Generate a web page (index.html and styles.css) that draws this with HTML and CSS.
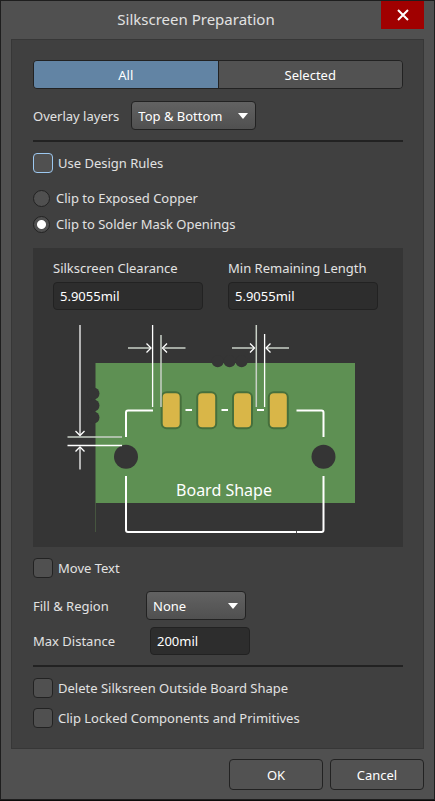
FILE: index.html
```
<!DOCTYPE html>
<html lang="en">

<head>
  <meta charset="UTF-8">
  <meta name="viewport" content="width=device-width, initial-scale=1">
  <title>Silkscreen Preparation</title>
  <link rel="stylesheet" href="styles.css">
</head>

<body>
  <form class="dialog">
    <header class="title-bar">
      <h1 class="title">Silkscreen Preparation</h1>
      <button type="button" class="close" aria-label="Close">
        <svg width="12" height="12" viewBox="0 0 12 12">
          <path d="M1 1l10 10M11 1L1 11" stroke="#fff" stroke-width="2" />
        </svg>
      </button>
    </header>

    <main class="panel">
      <div class="tabs">
        <button type="button" class="tab active">All</button>
        <button type="button" class="tab">Selected</button>
      </div>

      <div class="overlay">
        <label for="layers">Overlay layers</label>
        <select class="select layers" id="layers">
          <option>Top &amp; Bottom</option>
          <option>Top</option>
          <option>Bottom</option>
        </select>
      </div>

      <hr class="line">

      <label class="check"><input type="checkbox" class="box focused">Use Design Rules</label>

      <div class="radios">
        <label class="check"><input type="radio" name="clip" class="dot">Clip to Exposed Copper</label>
        <label class="check"><input type="radio" name="clip" class="dot" checked>Clip to Solder Mask Openings</label>
      </div>

      <section class="group">
        <div class="fields">
          <div class="field">
            <label for="clearance">Silkscreen Clearance</label>
            <input type="text" class="text" id="clearance" value="5.9055mil">
          </div>
          <div class="field">
            <label for="remaining">Min Remaining Length</label>
            <input type="text" class="text" id="remaining" value="5.9055mil">
          </div>
        </div>

        <svg class="board" viewBox="33 310 370 237" fill="none">
          <!-- board -->
          <path d="M95.5 363H355v140H95.5z" fill="#5e9053" />
          <path d="M95.5 503v29" stroke="#46553f" stroke-width="1" />
          <g fill="#353535">
            <circle cx="93.5" cy="393.5" r="6" />
            <circle cx="93.5" cy="405.5" r="6" />
            <circle cx="93.5" cy="417.5" r="6" />
            <circle cx="217.7" cy="361.3" r="6" />
            <circle cx="229.6" cy="361.3" r="6" />
            <circle cx="241.6" cy="361.3" r="6" />
            <circle cx="126" cy="456.7" r="12" />
            <circle cx="323.5" cy="456.7" r="12" />
          </g>
          <!-- pads -->
          <g fill="#d9b648" stroke="#466f3c" stroke-width="2">
            <rect x="161.7" y="392.3" width="19" height="36" rx="5" />
            <rect x="197.2" y="392.3" width="19" height="36" rx="5" />
            <rect x="233" y="392.3" width="19" height="36" rx="5" />
            <rect x="268.8" y="392.3" width="19" height="36" rx="5" />
          </g>
          <!-- silkscreen outline -->
          <g stroke="#fff" stroke-width="2">
            <path d="M153 410.5h-25q-2 0-2 2V437M296.5 410.5h25q2 0 2 2V437" />
            <path d="M126 476v54q0 2 2 2h193.5q2 0 2-2v-54" />
            <path d="M185.5 410h6.5M221.5 410h6.5M257 410h7" />
          </g>
          <path d="M296.5 531v2" stroke="#555" stroke-width="1" />
          <!-- dimension lines -->
          <g stroke="#b2b2b2" stroke-width="2">
            <path d="M80 325v110M80 448v21.5" />
          </g>
          <g stroke="#c8d0c6" stroke-width="1.5">
            <path d="M161 335v72M256.3 325v82M67.5 437H122" />
            <path d="M128 348h22M164 348h21.5M232 348h22M267 348h22" />
          </g>
          <g stroke="#fff" stroke-width="1.3">
            <path d="M152.6 325v82M264.6 334v73M67.5 445.5H122" />
            <path d="M75.5 431l4.5 4.5 4.5-4.5M75.5 451.5l4.5-4.5 4.5 4.5" />
            <path d="M146.5 343.5l4.5 4.5-4.5 4.5M167 343.5l-4.5 4.5 4.5 4.5" />
            <path d="M250 343.5l4.5 4.5-4.5 4.5M270.5 343.5l-4.5 4.5 4.5 4.5" />
          </g>
          <text class="board-text" x="224" y="496" text-anchor="middle">Board Shape</text>
        </svg>
      </section>

      <label class="check"><input type="checkbox" class="box">Move Text</label>

      <div class="options">
        <label class="option-name" for="fill">Fill &amp; Region</label>
        <select class="select fill" id="fill">
          <option>None</option>
          <option>All</option>
        </select>
      </div>
      <div class="options distance">
        <label class="option-name" for="distance">Max Distance</label>
        <input type="text" class="text short" id="distance" value="200mil">
      </div>

      <hr class="line">

      <div class="checks">
        <label class="check"><input type="checkbox" class="box">Delete Silksreen Outside Board Shape</label>
        <label class="check"><input type="checkbox" class="box">Clip Locked Components and Primitives</label>
      </div>
    </main>

    <footer class="buttons">
      <button type="submit" class="button">OK</button>
      <button type="button" class="button">Cancel</button>
    </footer>
  </form>
</body>

</html>
```
FILE: styles.css
```
* {
  box-sizing: border-box;
}

body {
  margin: 0;
  background-color: #0c0c0c;
}

body,
button,
input,
select {
  font: 13px/20px "Noto Sans", "Open Sans", sans-serif;
  color: #e2e2e2;
}

button,
input,
select {
  margin: 0;
  color: #fff;
}

.dialog {
  margin-bottom: 1px;
  padding: 0 10px 9px;
  border: 1px solid #1e1e1e;
  background-color: #505050;
}

.title-bar {
  display: grid;
  grid-template-columns: 1fr 43px;
  align-items: start;
  height: 38px;
}

.title {
  margin: 0;
  padding-top: 8px;
  font-size: 15px;
  line-height: 20px;
  font-weight: normal;
  text-align: center;
}

.close {
  display: flex;
  align-items: center;
  justify-content: center;
  height: 28px;
  padding: 0;
  border: 0;
  background-color: #a00000;
}

.panel {
  padding: 20px 20px 20px 21px;
  border: 1px solid #373737;
  background-color: #404040;
}

.tabs {
  display: flex;
  height: 29px;
  border: 1px solid #222;
  border-radius: 4px;
  overflow: hidden;
}

.tab {
  flex: 1;
  padding: 0;
  border: 0;
  background-color: #525252;
}

.tab + .tab {
  border-left: 1px solid #222;
}

.tab.active {
  background-color: #6284a4;
}

.overlay {
  display: flex;
  align-items: center;
  gap: 12px;
  margin-top: 12px;
}

.select {
  height: 29px;
  padding: 0 6px;
  border: 1px solid #222;
  border-radius: 4px;
  appearance: none;
  background: url("data:image/svg+xml,%3Csvg xmlns='http://www.w3.org/2000/svg' width='10' height='6'%3E%3Cpath d='M0 0h10L5 6z' fill='%23fff'/%3E%3C/svg%3E") no-repeat right 7px center, linear-gradient(#626262, #505050);
}

.layers {
  width: 125px;
}

.fill {
  width: 100px;
}

.line {
  height: 2px;
  margin: 10px 0 11px;
  border: 0;
  background-color: #222;
}

.check {
  display: flex;
  align-items: center;
  gap: 5px;
}

.box,
.dot {
  appearance: none;
  flex: none;
  width: 20px;
  height: 20px;
  border: 1px solid #222;
  border-radius: 4px;
  background-color: #505050;
}

.box:checked {
  background-color: #6284a4;
}

.focused {
  border-color: #9cc8f0;
}

.radios {
  display: grid;
  gap: 6px;
  margin: 15px 0 14px;
}

.radios .check {
  gap: 6px;
}

.dot {
  width: 17px;
  height: 17px;
  border-radius: 50%;
}

.dot:checked {
  background-image: radial-gradient(circle, #fff 4px, transparent 5px);
}

.group {
  margin-bottom: 11px;
  padding-top: 10px;
  background-color: #353535;
}

.fields {
  display: grid;
  grid-template-columns: 1fr 1fr;
  gap: 25px;
  max-width: 370px;
  padding: 0 25px 0 20px;
}

.field {
  display: grid;
  gap: 4px;
}

.text {
  width: 100%;
  height: 28px;
  padding: 0 6px;
  border: 1px solid #222;
  border-radius: 4px;
  background-color: #2d2d2d;
}

.short {
  width: 100px;
}

.board {
  display: block;
  width: 100%;
  max-width: 370px;
}

.board-text {
  font-size: 16px;
  fill: #fff;
}

.options {
  display: flex;
  align-items: center;
  margin-top: 13px;
}

.option-name {
  width: 113px;
}

.distance {
  margin-top: 7px;
}

.distance .option-name {
  width: 117px;
}

.checks {
  display: grid;
  gap: 10px;
}

.buttons {
  display: flex;
  justify-content: flex-end;
  gap: 7px;
  margin-top: 10px;
}

.button {
  width: 94px;
  height: 31px;
  padding: 0;
  border: 1px solid #222;
  border-radius: 4px;
  background-color: #525252;
}
```
